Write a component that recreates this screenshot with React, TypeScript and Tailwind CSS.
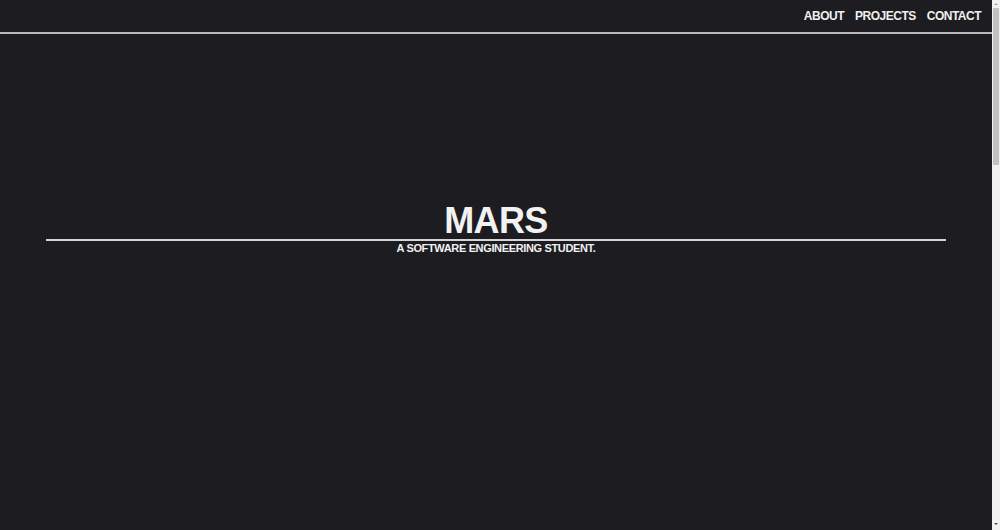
import React from "react";

const links = ["ABOUT", "PROJECTS", "CONTACT"];

function Header() {
  return (
    <header className="flex h-[34px] items-center justify-end border-b-2 border-[#b9b9bb] bg-[#1d1d21] pr-[11px]">
      <nav className="flex gap-[11px]">
        {links.map((l) => (
          <a key={l} href="#" className="text-[12px] font-bold tracking-[-0.5px] text-[#f0f0f0]">
            {l}
          </a>
        ))}
      </nav>
    </header>
  );
}

function Hero() {
  return (
    <section className="flex h-[496px] flex-col items-center pt-[169px]">
      <h1 className="text-[36px] font-bold leading-[36px] tracking-[-0.6px] text-[#f2f2f2]">MARS</h1>
      <div className="h-[2px] w-[900px] bg-[#d6d6d6]" />
      <p className="text-[11px] font-bold leading-[14px] tracking-[-0.35px] text-[#f0f0f0]">
        A SOFTWARE ENGINEERING STUDENT.
      </p>
    </section>
  );
}

function Scrollbar() {
  return (
    <aside className="flex h-full w-[8px] shrink-0 flex-col items-center bg-[#f1f1f1]">
      <div className="mt-[3px] h-0 w-0 border-x-[2px] border-b-[2px] border-x-transparent border-b-[#a3a3a3]" />
      <div className="mt-[3px] h-[157px] w-[6px] rounded-[1px] bg-[#c1c1c1]" />
      <div className="flex-1" />
      <div className="mb-[5px] h-0 w-0 border-x-[2px] border-t-[2px] border-x-transparent border-t-[#505050]" />
    </aside>
  );
}

export default function App() {
  return (
    <div
      className="flex h-screen overflow-hidden bg-[#1d1d21]"
      style={{ fontFamily: '"Liberation Sans", Arial, sans-serif' }}
    >
      <main className="min-w-0 flex-1">
        <Header />
        <Hero />
      </main>
      <Scrollbar />
    </div>
  );
}
